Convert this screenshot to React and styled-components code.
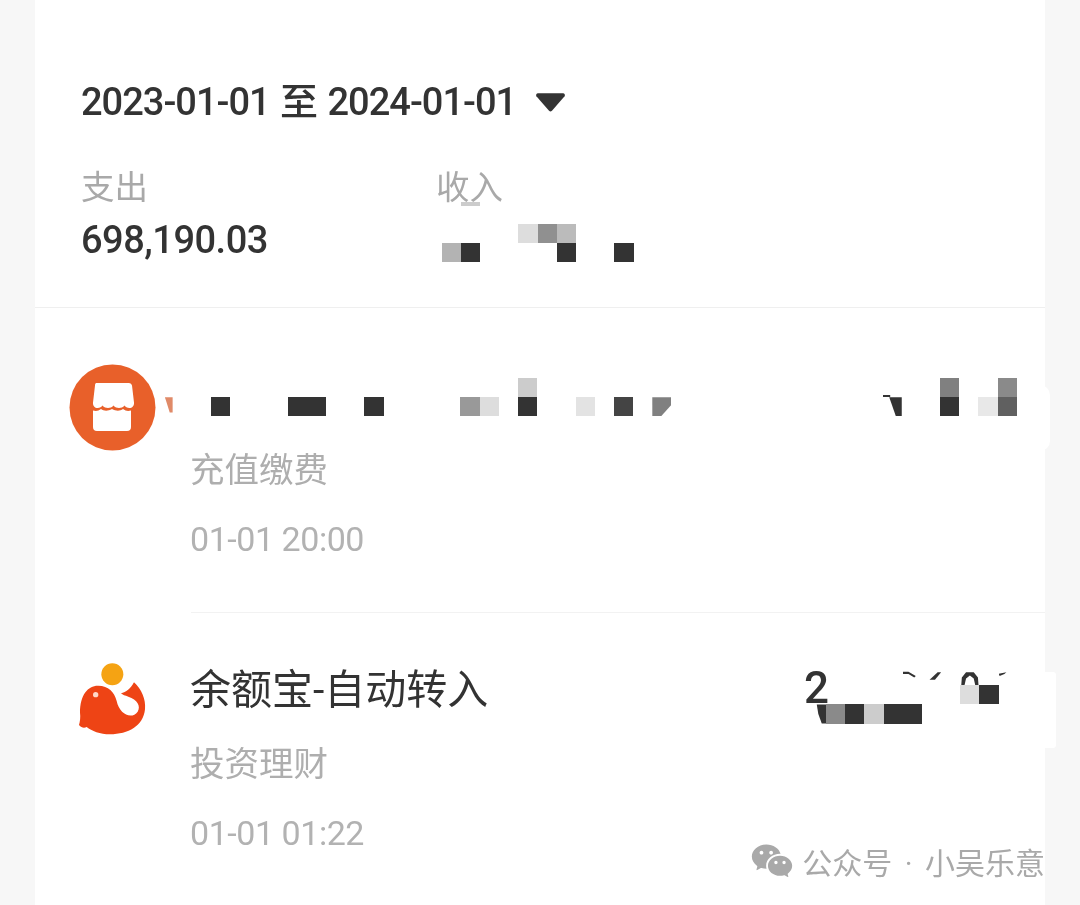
import React from 'react';
import styled, { createGlobalStyle } from 'styled-components';
import { RiWechatFill } from 'react-icons/ri';

const GlobalStyle = createGlobalStyle`
  html, body {
    margin: 0;
    padding: 0;
    background: #f7f7f7;
  }
  body {
    font-family: Roboto, "Noto Sans CJK SC", sans-serif;
    color: #333;
  }
`;

const Page = styled.div`
  width: 1080px;
  height: 905px;
  overflow: hidden;
  padding-left: 35px;
  box-sizing: border-box;
  background: #f7f7f7;
`;

const Card = styled.div`
  position: relative;
  width: 1010px;
  height: 905px;
  background: #fff;
  filter: blur(0.5px);
`;

const Summary = styled.section`
  padding: 77px 0 42px 46px;
  border-bottom: 1px solid #efefef;
`;

const DateRange = styled.div`
  display: flex;
  align-items: center;
  gap: 20px;
  height: 50px;
  font-size: 38px;
  font-weight: 500;
  letter-spacing: -1px;
  word-spacing: 2px;
  line-height: 50px;
`;

const Caret = styled.svg`
  width: 29px;
  height: 19px;
  margin-top: 1px;
`;

const Totals = styled.div`
  display: grid;
  grid-template-columns: 355px 355px;
  margin-top: 36px;
`;

const Label = styled.div`
  position: relative;
  height: 50px;
  font-size: 33.5px;
  line-height: 50px;
  color: #a9a9a9;
`;

const LabelSmudge = styled.span`
  position: absolute;
  left: 25px;
  top: 39px;
  width: 19px;
  height: 4px;
  background: #ccc;
`;

const Amount = styled.div`
  position: relative;
  height: 50px;
  margin-top: 2px;
  font-size: 38px;
  font-weight: 500;
  letter-spacing: -0.5px;
  line-height: 50px;
`;

const Row = styled.article`
  display: flex;
  padding: ${(p) => p.$top}px 0 ${(p) => p.$bottom}px 34px;
`;

const IconSlot = styled.div`
  flex: 0 0 87px;
  height: 87px;
  margin: ${(p) => p.$offset}px 34px 0 0;
`;

const RowBody = styled.div`
  flex: 1;
  min-width: 0;
`;

const Title = styled.div`
  position: relative;
  height: 50px;
  font-size: 41px;
  line-height: 50px;
`;

const Category = styled.div`
  height: 50px;
  margin-top: 24px;
  font-size: 34.5px;
  line-height: 50px;
  color: #aeaeae;
`;

const Time = styled.div`
  height: 50px;
  margin-top: 19px;
  font-size: 34px;
  letter-spacing: -0.45px;
  line-height: 50px;
  color: #b2b2b2;
`;

const Divider = styled.hr`
  height: 1px;
  margin: 0 0 0 156px;
  border: 0;
  background: #f2f2f2;
`;

// censor blocks sit on top of the text they hide
const Mosaic = styled.div`
  position: absolute;
  z-index: 2;
  left: ${(p) => p.$left}px;
  top: ${(p) => p.$top}px;
  display: grid;
  grid-template-columns: repeat(${(p) => p.$cols}, 19.2px);
  grid-auto-rows: 19.2px;
`;

const Cell = styled.span`
  grid-column: ${(p) => p.$col + 1};
  grid-row: ${(p) => p.$row + 1};
  background: ${(p) => p.$color};
  clip-path: ${(p) => p.$clip || 'none'};
`;

const Peek = styled.span`
  position: absolute;
  left: 614px;
  top: -2px;
  font-size: 44px;
  font-weight: 500;
  line-height: 50px;
`;

const EdgePatch = styled.div`
  position: absolute;
  left: 1005px;
  top: ${(p) => p.$top}px;
  width: ${(p) => p.$width}px;
  height: ${(p) => p.$height}px;
  background: #fff;
  border-radius: 0 ${(p) => p.$radius}px ${(p) => p.$radius}px 0;
`;

const Watermark = styled.div`
  position: absolute;
  right: 0;
  top: 837px;
  display: flex;
  align-items: center;
  gap: 8px;
  height: 48px;
  font-size: 30px;
  word-spacing: 5px;
  color: #a9a9a9;
  white-space: nowrap;
  svg {
    width: 44px;
    height: 44px;
    color: #a9a9a9;
  }
`;

const Blocks = ({ cells, left, top, cols }) => (
  <Mosaic $left={left} $top={top} $cols={cols}>
    {cells.map(([col, row, color, clip]) => (
      <Cell key={`${col}-${row}`} $col={col} $row={row} $color={color} $clip={clip} />
    ))}
  </Mosaic>
);

const D = '#333';

const incomeCells = [
  [4, 0, '#ddd'], [5, 0, '#909090'], [6, 0, '#bbb'],
  [0, 1, '#b3b3b3'], [1, 1, D], [6, 1, D], [9, 1, D],
];

const merchantCells = [
  [0, 1, '#e08a68', 'polygon(60% 0, 100% 0, 100% 80%, 85% 80%)'],
  [3, 1, D], [7, 1, D], [8, 1, D], [11, 1, D],
  [16, 1, '#999'], [17, 1, '#ddd'],
  [19, 0, '#ccc'], [19, 1, D],
  [22, 1, '#e3e3e3'], [24, 1, '#444'],
  [26, 1, '#808080', 'polygon(0 0, 100% 0, 100% 40%, 45% 100%, 0 100%)'],
  [38, 0, D, 'polygon(0 88%, 40% 88%, 40% 100%, 0 100%)'],
  [38, 1, D, 'polygon(35% 0, 100% 0, 100% 100%, 70% 100%)'],
  [41, 0, '#808080'], [41, 1, D],
  [43, 1, '#e8e8e8'],
  [44, 0, '#8a8a8a'], [44, 1, '#606060'],
];

const amountCells = [
  [5, 0, D, 'polygon(0 30%, 30% 30%, 68% 52%, 60% 60%, 30% 42%, 0 42%)'],
  [6, 0, D, 'polygon(82% 32%, 100% 32%, 68% 72%, 40% 72%)'],
  [8, 0, D, 'polygon(5% 100%, 8% 60%, 30% 32%, 70% 32%, 92% 60%, 95% 100%, 78% 100%, 70% 65%, 50% 50%, 30% 65%, 22% 100%)'],
  [10, 0, D, 'polygon(0 40%, 40% 32%, 30% 42%, 5% 52%)'],
  [8, 1, '#ddd'], [9, 1, D],
  [0, 2, D, 'polygon(52% 0, 100% 0, 100% 100%, 78% 100%, 60% 50%)'],
  [1, 2, '#8a8a8a'], [2, 2, D], [3, 2, '#ccc'], [4, 2, D], [5, 2, D],
];

const StoreIcon = () => (
  <svg width="87" height="87" viewBox="0 0 87 87">
    <circle cx="43.5" cy="43.5" r="43" fill="#e8602a" />
    <path
      d="M27 19h33a3 3 0 0 1 3 2.500l2 17c.4 3.500-2 5.500-4.500 5.500-2.500 0-4-1-5-2.500-1.500 1.800-3.500 2.500-5.500 2.500s-4-.7-5.500-2.500c-1.500 1.800-3.500 2.500-5.500 2.500s-4-.7-5.500-2.500c-1 1.500-2.500 2.500-5 2.500s-4.900-2-4.500-5.500l2-17A3 3 0 0 1 27 19z"
      fill="#fff"
    />
    <path
      d="M24 46.500c3 1 5.500.5 8-1.500 3 2.300 7 2.300 11 0 4 2.300 8 2.300 11 0 2.500 2 5 2.500 8 1.500V63a4 4 0 0 1-4 4H28a4 4 0 0 1-4-4z"
      fill="#fff"
    />
  </svg>
);

const WhaleIcon = () => (
  <svg width="87" height="100" viewBox="27 0 261 300">
    <circle cx="157" cy="70" r="33" fill="#f5a313" />
    <path
      d="M60 185C60 130 85 103 115 104C145 105 163 122 170 150C178 190 215 207 233 182C243 165 232 145 205 137C195 134 188 132 183 127C198 125 212 112 222 94C245 115 258 145 255 175C250 225 205 250 150 250C120 250 95 240 80 228C72 232 64 230 57 222C60 212 62 198 60 185Z"
      fill="#ee4415"
    />
    <circle cx="107" cy="131" r="8" fill="#ffd9c9" />
  </svg>
);

const App = () => {
  return (
    <Page>
      <GlobalStyle />
      <Card>
        <Summary>
          <DateRange>
            2023-01-01 至 2024-01-01
            <Caret viewBox="0 0 30 19">
              <path d="M2 0h26a2 2 0 0 1 1.600 3L16.500 18a2 2 0 0 1-3 0L.4 3A2 2 0 0 1 2 0z" fill="#333" />
            </Caret>
          </DateRange>
          <Totals>
            <Label>支出</Label>
            <Label>
              收入
              <LabelSmudge />
            </Label>
            <Amount>698,190.03</Amount>
            <Amount>
              <Blocks cells={incomeCells} left={5.7} top={9} cols={10} />
            </Amount>
          </Totals>
        </Summary>

        <Row $top={63} $bottom={48}>
          <IconSlot $offset={-7}>
            <StoreIcon />
          </IconSlot>
          <RowBody>
            <Title>
              <Blocks cells={merchantCells} left={-36.6} top={7} cols={45} />
            </Title>
            <Category>充值缴费</Category>
            <Time>01-01 20:00</Time>
          </RowBody>
        </Row>

        <Divider />

        <Row $top={52} $bottom={0}>
          <IconSlot $offset={-14}>
            <WhaleIcon />
          </IconSlot>
          <RowBody>
            <Title>
              余额宝-自动转入
              <Peek>2</Peek>
              <Blocks cells={amountCells} left={616.8} top={1} cols={11} />
            </Title>
            <Category>投资理财</Category>
            <Time>01-01 01:22</Time>
          </RowBody>
        </Row>

        <EdgePatch $top={385} $width={10} $height={66} $radius={10} />
        <EdgePatch $top={672} $width={16} $height={76} $radius={3} />

        <Watermark>
          <RiWechatFill />
          <span>公众号 · 小吴乐意</span>
        </Watermark>
      </Card>
    </Page>
  );
};

export default App;
